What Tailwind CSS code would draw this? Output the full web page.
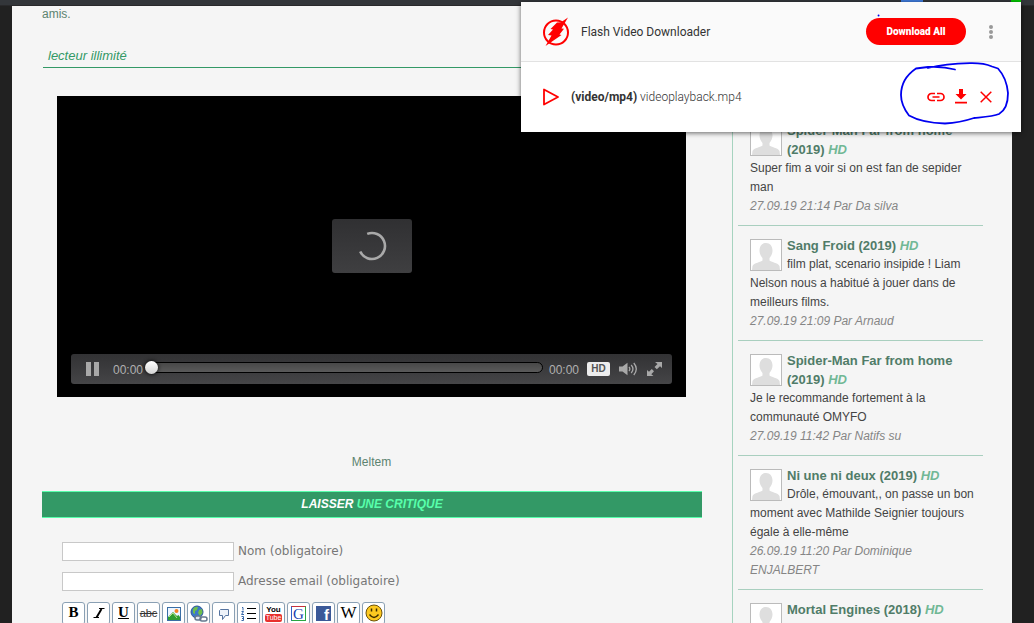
<!DOCTYPE html>
<html lang="fr">
<head>
<meta charset="utf-8">
<meta name="viewport" content="width=device-width, initial-scale=1">
<title>Flash Video Downloader</title>
<script src="https://cdn.jsdelivr.net/npm/@tailwindcss/browser@4"></script>
</head>
<body class="h-screen overflow-hidden bg-[#212121] font-['Liberation_Sans',Arial,sans-serif] text-xs text-[#5c8370]">
<svg class="hidden">
  <symbol id="avatar" viewBox="0 0 30 30">
    <rect width="30" height="30" fill="#fff"/>
    <path fill="#dedede" d="M15 3c4 0 6.500 3 6.500 7.500 0 3-1.500 6-3 7.500v2.500c1 1.500 9 2.500 10 5.500l.5 4H1l.5-4c1-3 9-4 10-5.500V18c-1.500-1.500-3-4.500-3-7.500C8.500 6 11 3 15 3z"/>
  </symbol>
</svg>

<div class="flex h-[6px] justify-end gap-[88px] border-b border-[#29292b] bg-[#33363a] pr-[13px]">
  <span class="h-[2px] w-[22px] bg-[#3f7de0]"></span>
  <span class="h-[2px] w-[10px] bg-[#00c800]"></span>
</div>

<div class="mr-[22px] ml-3 flex min-h-full bg-[#f5f5f5] pl-[30px]">
  <main class="min-w-0 flex-1">
    <p class="h-4 leading-4">amis.</p>
    <h2 class="mt-5 ml-px border-b border-[#339966] pt-[5px] pb-[3px] pl-[5px] text-[13px] leading-[17px] text-[#339966] italic">lecteur illimité</h2>

    <section class="mt-7 mr-4 ml-[15px] grid h-[301px] bg-black" aria-label="Lecteur vidéo">
      <div class="col-start-1 row-start-1 mb-px flex h-[54px] w-20 items-center justify-center self-center justify-self-center rounded-[3px] bg-linear-to-b from-[#303032] to-[#3f3f41]">
        <svg class="size-[30px]" viewBox="0 0 30 30" fill="none" stroke="#a9a9a9" stroke-width="2.600"><path d="M10.200 2.900A13 13 0 1 1 3.200 20.500"/></svg>
      </div>
      <div class="col-start-1 row-start-1 mx-[14px] mb-[13px] flex h-[30px] items-center self-end rounded-[3px] bg-linear-to-b from-[#323234] to-[#454547] pr-[10px] pl-[15px] text-[#b0b0b0]">
        <button class="flex h-[14px] w-[13px] justify-between" aria-label="Pause"><span class="h-full w-[5px] bg-[#a8a8a8]"></span><span class="h-full w-[5px] bg-[#a8a8a8]"></span></button>
        <span class="ml-[14px] pt-px">00:00</span>
        <div class="relative mb-[3px] ml-2 h-[11px] flex-1 rounded-r-full border border-black bg-linear-to-b from-[#484848] to-[#5a5a5a]">
          <button class="absolute top-[-2px] left-[-7px] size-[13px] rounded-full bg-linear-to-b from-white to-[#d4d4d4] shadow-[0_0_4px_#000]" aria-label="Position"></button>
        </div>
        <span class="ml-[6px] pt-px">00:00</span>
        <button class="ml-2 h-[14px] w-[23px] rounded-[2px] bg-[#ededed] text-[10px] leading-[14px] font-bold text-[#555]">HD</button>
        <button class="ml-[9px]" aria-label="Volume"><svg class="h-[14px] w-[19px]" viewBox="0 0 19 14"><path fill="#a8a8a8" d="M0 4.500h3.500L8.500.8v12.400L3.500 9.500H0z"/><path fill="none" stroke="#a8a8a8" stroke-width="1.300" d="M10 5q1.700 2 0 4M12.200 3q3.500 4 0 8M14.800 1q5 6 0 12"/></svg></button>
        <button class="ml-[9px]" aria-label="Plein écran"><svg class="h-[14px] w-[15px]" viewBox="0 0 15 14" fill="#a8a8a8"><path d="M8 0h7v6l-2-1.700L9.800 7.200 7.500 5l3-3zM0 8l2 1.700 2.800-2.600L7 9.300l-2.700 2.900L6.500 14H0z"/></svg></button>
      </div>
    </section>

    <p class="mt-[57px] pr-px text-center leading-4">Meltem</p>
    <h2 class="mt-[21px] border-y border-[#57ffab] bg-[#339966] text-center text-[12px] leading-[25px] font-bold text-white italic">LAISSER <span class="text-[#57ffab]">UNE CRITIQUE</span></h2>

    <form class="mt-[18px] pl-5 font-['DejaVu_Sans',Verdana,sans-serif] text-xs text-[#777]">
      <div class="flex h-[30px] items-center"><input id="nom" class="mr-1 h-[19px] w-[172px] border border-[#c8c8c8] bg-white px-1 text-xs"><label for="nom">Nom (obligatoire)</label></div>
      <div class="flex h-[30px] items-center"><input id="mail" type="email" class="mr-1 h-[19px] w-[172px] border border-[#c8c8c8] bg-white px-1 text-xs"><label for="mail">Adresse email (obligatoire)</label></div>
      <div class="mt-[6px] flex gap-[2px] font-['Liberation_Serif',serif] text-[15px] text-black">
        <button type="button" class="flex h-[23px] w-[23px] items-center justify-center rounded-[3px] border border-[#8aa0b4] bg-white pb-px font-bold">B</button>
        <button type="button" class="flex h-[23px] w-[23px] items-center justify-center rounded-[3px] border border-[#8aa0b4] bg-white" aria-label="Italique"><svg class="size-4" viewBox="0 0 16 16" stroke="#000" fill="none"><path stroke-width="1.900" d="M10.500 3 5.500 11.500"/><path d="M8 2.500h5.500M2.500 11.500h5.500"/></svg></button>
        <button type="button" class="flex h-[23px] w-[23px] items-center justify-center rounded-[3px] border border-[#8aa0b4] bg-white pb-px font-bold underline">U</button>
        <button type="button" class="flex h-[23px] w-[23px] items-center justify-center rounded-[3px] border border-[#8aa0b4] bg-white pb-px font-['Liberation_Sans',sans-serif] text-[11px] text-[#333] line-through">abc</button>
        <button type="button" class="flex h-[23px] w-[23px] items-center justify-center rounded-[3px] border border-[#8aa0b4] bg-white" aria-label="Image"><svg class="size-4" viewBox="0 0 16 16"><rect x="1.500" y="1.500" width="13" height="13" fill="#eef6ff" stroke="#3a6ea5"/><circle cx="10.500" cy="5" r="2" fill="#f58220"/><path fill="#2f9e2f" d="M2 14v-3l5-5 4 4 1.500-1L14 11v3z"/><path stroke="#b8e28a" d="m3 11 4-4 4 5"  fill="none"/></svg></button>
        <button type="button" class="flex h-[23px] w-[23px] items-center justify-center rounded-[3px] border border-[#8aa0b4] bg-white" aria-label="Lien"><svg class="size-[18px]" viewBox="0 0 18 18"><circle cx="7" cy="7" r="6" fill="#3d78c8" stroke="#2b5594"/><path fill="#6fbf4a" d="M3 4q2-3 5-2l-1 3-2 1v3l-2-1zM9 5l3-1 .5 4L10 11 8 8z"/><g fill="none" stroke="#65788f" stroke-width="1.500"><rect x="5" y="11" width="6" height="4" rx="2" fill="#dfe7f1"/><rect x="10" y="12" width="7" height="4" rx="2"/></g></svg></button>
        <button type="button" class="flex h-[23px] w-[23px] items-center justify-center rounded-[3px] border border-[#8aa0b4] bg-white" aria-label="Citation"><svg class="size-4" viewBox="0 0 16 16"><path fill="#eef3fa" stroke="#5674a0" d="M4.500 3.500H12.500V9.500H9.500L6.500 13.500V9.500H3.500V4.500z"/></svg></button>
        <button type="button" class="flex h-[23px] w-[23px] items-center justify-center rounded-[3px] border border-[#8aa0b4] bg-white" aria-label="Liste"><svg class="size-[17px]" viewBox="0 0 17 17"><path stroke="#000" stroke-width="1.200" d="M7 3.500h9M7 8.500h9M7 13.500h9"/><path fill="none" stroke="#3767a8" d="M2 2.500h1v3M1.500 6.500h2l-2 3h2.500M1.500 11.500h2v4h-2M2 13.500h1"/></svg></button>
        <button type="button" class="flex h-[23px] w-[23px] flex-col items-center justify-center rounded-[3px] border border-[#8aa0b4] bg-white font-['Liberation_Sans',sans-serif] text-[8px] leading-[8px] font-bold"><span>You</span><span class="rounded-[2px] bg-[#e8302c] px-px text-[7px] font-normal text-white">Tube</span></button>
        <button type="button" class="flex h-[23px] w-[23px] items-center justify-center rounded-[3px] border border-[#8aa0b4] bg-white"><span class="size-[15px] border border-t-[#c8323c] border-r-[#2aa640] border-b-[#2aa640] border-l-[#3060c8] text-[15px] leading-[14px] text-[#1840b0]">G</span></button>
        <button type="button" class="flex h-[23px] w-[23px] items-center justify-center rounded-[3px] border border-[#8aa0b4] bg-white"><span class="size-[15px] bg-[#3b5998] pr-[2px] text-right font-['Liberation_Sans',sans-serif] text-[15px] leading-[17px] font-bold text-white">f</span></button>
        <button type="button" class="flex h-[23px] w-[23px] items-center justify-center rounded-[3px] border border-[#8aa0b4] bg-white text-[17px]">W</button>
        <button type="button" class="flex h-[23px] w-[23px] items-center justify-center rounded-[3px] border border-[#8aa0b4] bg-white pb-[2px]" aria-label="Smiley"><svg class="size-[18px]" viewBox="0 0 18 18"><circle cx="9" cy="9" r="8" fill="#fdc920" stroke="#6d5208"/><path fill="none" stroke="#3c2c00" stroke-width="1.300" d="M4.500 10.500q4.500 6 9 0"/><path stroke="#3c2c00" stroke-width="1.500" d="M6.500 4.500v3M11.500 4.500v3"/></svg></button>
      </div>
    </form>
  </main>

  <aside class="ml-[30px] w-[280px] shrink-0 border-l border-[#a6d3bf] pt-[105px] pr-[29px] pl-[5px] leading-[19px] text-[#444]">
    <article class="border-b border-[#a9cfbf] pt-[10px] pb-[9px] pl-3">
      <svg class="float-left mt-[3px] mr-[5px] size-8 border border-[#bbb]"><use href="#avatar"/></svg>
      <h3 class="text-[13px] font-bold text-[#507c68]">Spider-Man Far from home (2019) <i class="text-[#71b895]">HD</i></h3>
      <p>Super fim a voir si on est fan de sepider man</p>
      <p class="text-[#858585] italic">27.09.19 21:14 Par Da silva</p>
    </article>
    <article class="border-b border-[#a9cfbf] pt-[10px] pb-[9px] pl-3">
      <svg class="float-left mt-[3px] mr-[5px] size-8 border border-[#bbb]"><use href="#avatar"/></svg>
      <h3 class="text-[13px] font-bold text-[#507c68]">Sang Froid (2019) <i class="text-[#71b895]">HD</i></h3>
      <p>film plat, scenario insipide ! Liam Nelson nous a habitué à jouer dans de meilleurs films.</p>
      <p class="text-[#858585] italic">27.09.19 21:09 Par Arnaud</p>
    </article>
    <article class="border-b border-[#a9cfbf] pt-[10px] pb-[9px] pl-3">
      <svg class="float-left mt-[3px] mr-[5px] size-8 border border-[#bbb]"><use href="#avatar"/></svg>
      <h3 class="text-[13px] font-bold text-[#507c68]">Spider-Man Far from home (2019) <i class="text-[#71b895]">HD</i></h3>
      <p class="pr-10">Je le recommande fortement à la communauté OMYFO</p>
      <p class="text-[#858585] italic">27.09.19 11:42 Par Natifs su</p>
    </article>
    <article class="border-b border-[#a9cfbf] pt-[10px] pb-[9px] pl-3">
      <svg class="float-left mt-[3px] mr-[5px] size-8 border border-[#bbb]"><use href="#avatar"/></svg>
      <h3 class="text-[13px] font-bold text-[#507c68]">Ni une ni deux (2019) <i class="text-[#71b895]">HD</i></h3>
      <p>Drôle, émouvant,, on passe un bon moment avec Mathilde Seignier toujours égale à elle-même</p>
      <p class="text-[#858585] italic">26.09.19 11:20 Par Dominique ENJALBERT</p>
    </article>
    <article class="pt-[10px] pl-3">
      <svg class="float-left mt-[3px] mr-[5px] size-8 border border-[#bbb]"><use href="#avatar"/></svg>
      <h3 class="text-[13px] font-bold text-[#507c68]">Mortal Engines (2018) <i class="text-[#71b895]">HD</i></h3>
    </article>
  </aside>
</div>

<div class="absolute top-[2px] right-[13px] w-[500px] bg-white font-[Roboto,sans-serif] text-[#333] shadow-[0_1px_5px_rgba(0,0,0,0.6)]">
  <header class="flex h-[60px] items-center border-b border-[#e2e2e2] bg-[#fafafa] pr-7 pl-5">
    <svg class="h-[30px] w-[30px]" viewBox="0 0 30 30"><circle cx="15" cy="15.500" r="12" fill="none" stroke="#f00" stroke-width="2"/><path fill="#f00" d="M27 0.500 20.500 11.500l2.500.3-4.500 5.700 2 .5L4.500 29l6-10.500-3.500-.5 5-5.500-2.500-.500L16 5.500l4-.3z"/></svg>
    <h1 class="ml-[10px] text-xs">Flash Video Downloader</h1>
    <button class="ml-auto h-[27px] w-[100px] rounded-full bg-[#f00] text-[10px] font-black text-white">Download All</button>
    <button class="ml-[23px] flex flex-col gap-[1px]" aria-label="Menu"><span class="size-1 rounded-full bg-[#999]"></span><span class="size-1 rounded-full bg-[#999]"></span><span class="size-1 rounded-full bg-[#999]"></span></button>
  </header>
  <div class="flex h-[70px] items-center pr-[29px] pb-px pl-[22px] text-xs">
    <svg class="h-[18px] w-[16px]" viewBox="0 0 16 18"><path fill="none" stroke="#f00" stroke-width="1.800" stroke-linejoin="round" d="M1 1.500v15L15 9z"/></svg>
    <p class="ml-3 font-light"><b class="font-bold">(video/mp4)</b> videoplayback.mp4</p>
    <button class="ml-auto" aria-label="Copier le lien"><svg class="h-[10px] w-[18px]" viewBox="0 0 18 10" fill="none" stroke="#f00" stroke-width="1.700"><path d="M8 1.500H4.500a3.500 3.500 0 0 0 0 7H8M10 1.500h3.500a3.500 3.500 0 0 1 0 7H10M5.500 5h7"/></svg></button>
    <button class="ml-[10px]" aria-label="Télécharger"><svg class="h-[15px] w-3" viewBox="0 0 12 15" fill="#f00"><path d="M4 0h4v5h3.500L6 10.500.500 5H4zM0 12.800h12v1.700H0z"/></svg></button>
    <button class="ml-[13px]" aria-label="Supprimer"><svg class="size-3" viewBox="0 0 12 12" stroke="#f00" stroke-width="1.500"><path d="m.7.7 10.600 10.600m0-10.600L.7 11.300"/></svg></button>
  </div>
  <svg class="pointer-events-none absolute top-0 right-0 h-[130px] w-[154px]" viewBox="867 2 154 130" fill="none" stroke="#0000f0" stroke-width="1.800" stroke-linecap="round" stroke-linejoin="round"><path d="M955 69.500C946 67 937 66.500 928 67L916 68.500C905 76 901 85 901 95C901 103 904 109 909 115.500C917 120 928 123 945 123.500C955 123 965 121 974 118C984 117 993 116.500 999 114C1006 110 1008 101 1008 93C1007 82 1003 74 998 68.500L992 66.500C985 63.500 979 63 970 63.200C955 63.500 942 64.500 928 68"/><path d="M878.500 15.500h.1"/></svg>
</div>
</body>
</html>
